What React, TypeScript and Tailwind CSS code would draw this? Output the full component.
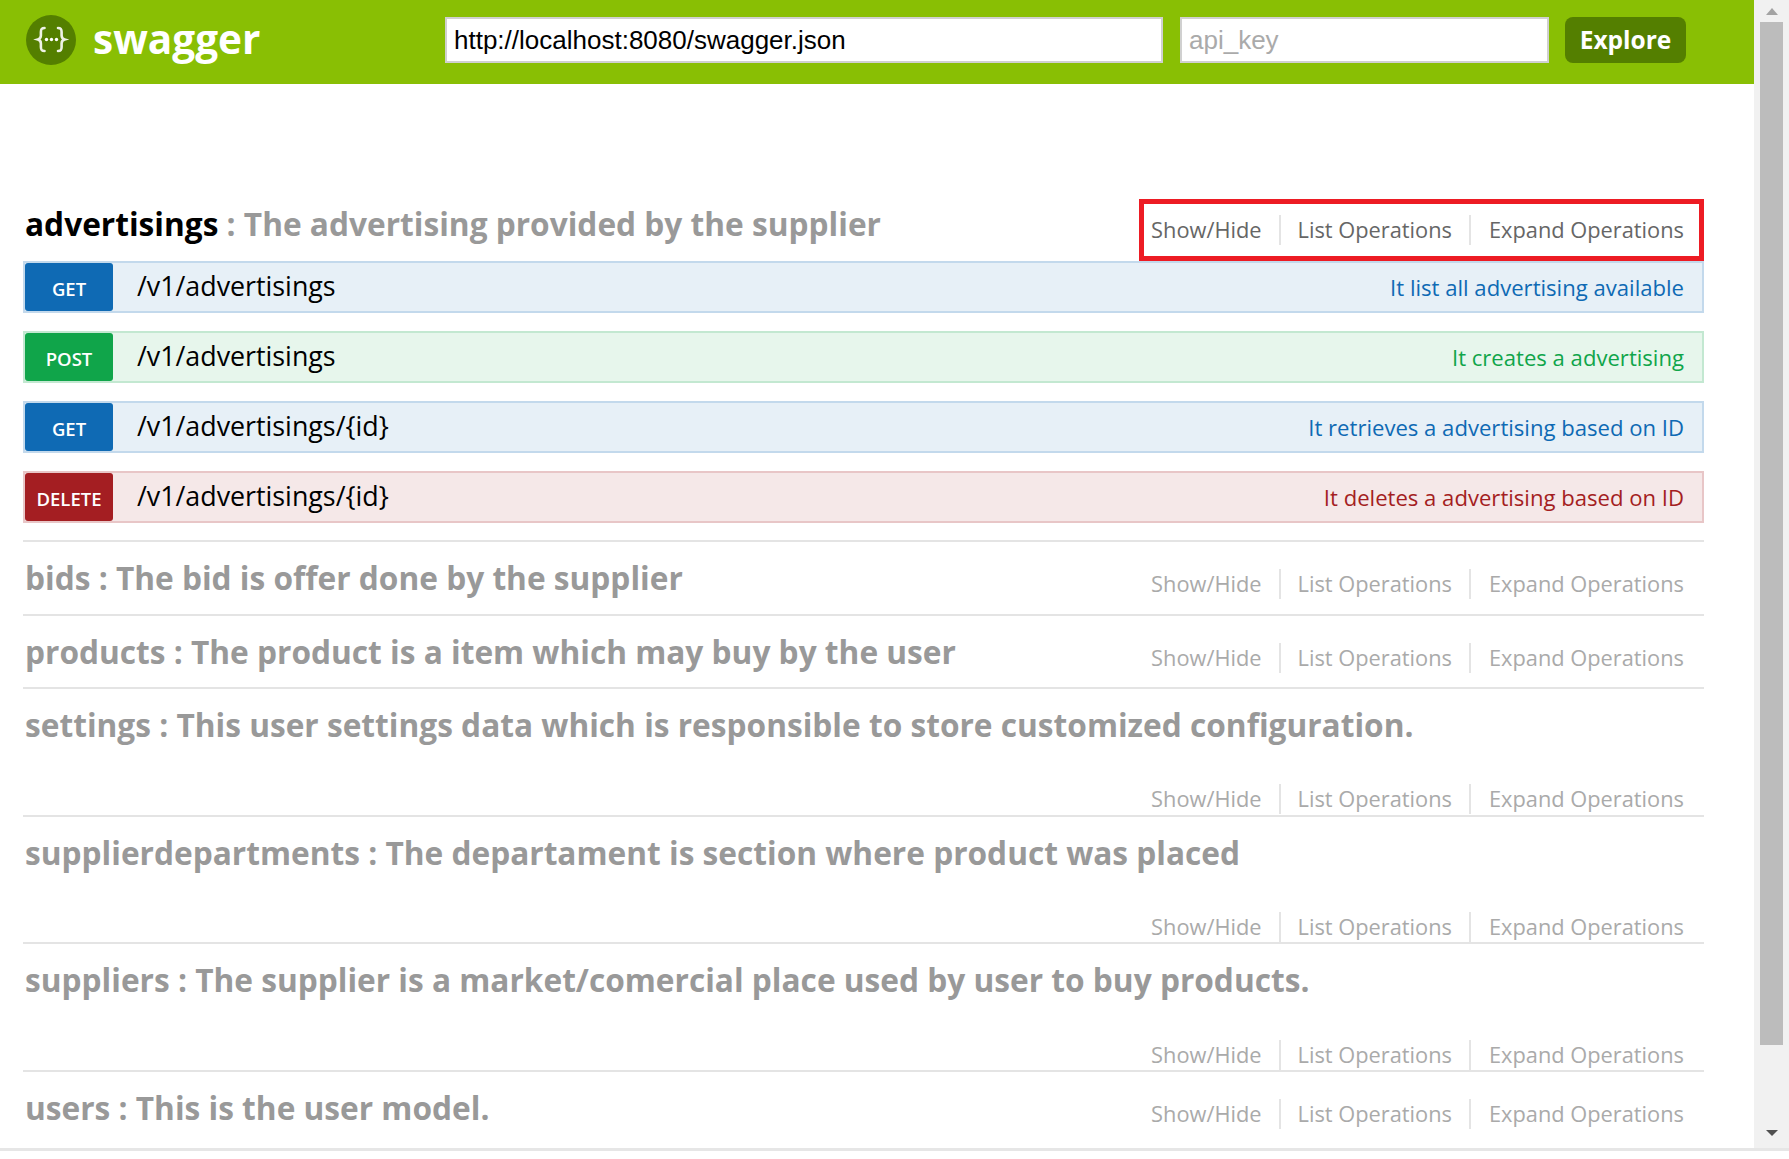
const LABEL_FONT = "font-['Open_Sans','Noto_Sans',sans-serif]";

type Operation = {
  method: string;
  path: string;
  summary: string;
  rowClass: string;
  badgeClass: string;
  textClass: string;
};

const METHOD_STYLES = {
  GET: {
    rowClass: "border-[#c3d9ec] bg-[#e7f0f7]",
    badgeClass: "bg-[#0f6ab4]",
    textClass: "text-[#0f6ab4]",
  },
  POST: {
    rowClass: "border-[#c3e8d1] bg-[#e7f6ec]",
    badgeClass: "bg-[#10a54a]",
    textClass: "text-[#10a54a]",
  },
  DELETE: {
    rowClass: "border-[#e8c6c7] bg-[#f5e8e8]",
    badgeClass: "bg-[#a41e22]",
    textClass: "text-[#a41e22]",
  },
};

const OPERATIONS: Operation[] = [
  { method: "GET", path: "/v1/advertisings", summary: "It list all advertising available", ...METHOD_STYLES.GET },
  { method: "POST", path: "/v1/advertisings", summary: "It creates a advertising", ...METHOD_STYLES.POST },
  { method: "GET", path: "/v1/advertisings/{id}", summary: "It retrieves a advertising based on ID", ...METHOD_STYLES.GET },
  { method: "DELETE", path: "/v1/advertisings/{id}", summary: "It deletes a advertising based on ID", ...METHOD_STYLES.DELETE },
];

const RESOURCES = [
  { name: "bids", text: "The bid is offer done by the supplier" },
  { name: "products", text: "The product is a item which may buy by the user" },
  { name: "settings", text: "This user settings data which is responsible to store customized configuration." },
  { name: "supplierdepartments", text: "The departament is section where product was placed" },
  { name: "suppliers", text: "The supplier is a market/comercial place used by user to buy products." },
  { name: "users", text: "This is the user model." },
];

function SwaggerLogo() {
  return (
    <svg viewBox="0 0 50 50" className="h-[50px] w-[50px] shrink-0">
      <circle cx="25" cy="25" r="25" fill="#547f00" />
      <g fill="none" stroke="#fff" strokeWidth="2.6" strokeLinecap="round" opacity="0.9">
        <path d="M18.5 13c-3 0-3.6 1.3-3.6 4v3.6c0 2-.9 3.3-3 3.9 2.1.6 3 1.9 3 3.9V32c0 2.7.6 4 3.6 4" />
        <path d="M32 13c3 0 3.6 1.3 3.6 4v3.6c0 2 .9 3.3 3 3.9-2.1.6-3 1.9-3 3.9V32c0 2.7-.6 4-3.6 4" />
      </g>
      <circle cx="20.5" cy="24.5" r="1.7" fill="#fff" />
      <circle cx="25.5" cy="24.5" r="1.7" fill="#fff" />
      <circle cx="30.5" cy="24.5" r="1.7" fill="#fff" />
    </svg>
  );
}

function Header() {
  return (
    <header className="flex h-[84px] items-center bg-[#89bf04] pb-[4px] pl-[26px]">
      <SwaggerLogo />
      <span className={`ml-[17px] w-[352px] pb-[2px] text-[40.5px] leading-none font-bold text-white ${LABEL_FONT}`}>swagger</span>
      <input
        readOnly
        value="http://localhost:8080/swagger.json"
        className="h-[46px] w-[718px] border-2 border-[#d0d0d0] bg-white px-[7px] font-['Liberation_Sans',sans-serif] text-[26px] text-black outline-none"
      />
      <input
        readOnly
        placeholder="api_key"
        className="ml-[17px] h-[46px] w-[369px] border-2 border-[#d0d0d0] bg-white px-[7px] font-['Liberation_Sans',sans-serif] text-[26px] outline-none placeholder:text-[#aaa]"
      />
      <button className={`ml-[16px] h-[46px] w-[121px] rounded-[8px] bg-[#547f00] text-[24.5px] font-bold text-white ${LABEL_FONT}`}>
        Explore
      </button>
    </header>
  );
}

function Links({ dim }: { dim: boolean }) {
  const color = dim ? "text-[#aaa]" : "text-[#666]";
  return (
    <ul className={`flex h-[30px] items-center text-[21.8px] leading-none ${color} ${LABEL_FONT}`}>
      <li className="border-r-2 border-[#e4e4e4] pr-[17px] leading-[30px]">Show/Hide</li>
      <li className="border-r-2 border-[#e4e4e4] px-[17px] leading-[30px]">List Operations</li>
      <li className="pl-[18px] leading-[30px]">Expand Operations</li>
    </ul>
  );
}

function OperationRow({ op }: { op: Operation }) {
  return (
    <div className={`flex h-[52px] items-center border-2 pr-[18px] ${op.rowClass}`}>
      <span className={`flex h-[48px] w-[88px] shrink-0 items-center justify-center rounded-[3px] pt-[3px] text-[18.5px] font-semibold text-white ${op.badgeClass}`}>
        {op.method}
      </span>
      <span className="ml-[24px] flex-1 pb-[1px] text-[26.8px] text-black">{op.path}</span>
      <span className={`pt-[2px] text-[22.1px] ${op.textClass}`}>{op.summary}</span>
    </div>
  );
}

function Scrollbar() {
  return (
    <aside className="flex w-[35px] shrink-0 flex-col items-center bg-[#f1f1f1]">
      <div className="flex h-[22px] items-center justify-center">
        <div className="h-0 w-0 border-x-[6px] border-b-[7px] border-x-transparent border-b-[#a3a3a3]" />
      </div>
      <div className="h-[1023px] w-[23px] bg-[#bcbcbc]" />
      <div className="flex flex-1 items-end justify-center pb-[12px]">
        <div className="h-0 w-0 border-x-[6px] border-t-[6px] border-x-transparent border-t-[#505050]" />
      </div>
    </aside>
  );
}

export default function App() {
  return (
    <div className={`h-[1159px] overflow-hidden bg-white ${LABEL_FONT}`}>
      <div className="flex h-[1151px] border-b-[3px] border-[#e6e6e6]">
        <main className="min-w-0 flex-1">
          <Header />
          <div className="pr-[50px] pl-[23px]">
            {/* open resource */}
            <section className="mt-[115px]">
              <div className="flex items-end justify-between">
                <h2 className="pb-[15px] pl-[2px] text-[31.65px] leading-[44px] font-bold text-[#999]">
                  <span className="text-black">advertisings</span> : The advertising provided by the supplier
                </h2>
                <div className="flex h-[62px] items-center border-[5px] border-[#ed1c24] pr-[15px] pl-[7px]">
                  <div className="-mt-[1px]">
                    <Links dim={false} />
                  </div>
                </div>
              </div>
              <div className="flex flex-col gap-[18px]">
                {OPERATIONS.map((op, i) => (
                  <OperationRow key={i} op={op} />
                ))}
              </div>
            </section>
            <div className="mt-[17px] border-t-2 border-[#e4e4e4]">
              {RESOURCES.map((r, i) => (
                <section
                  key={r.name}
                  className={`flex flex-wrap justify-between gap-y-[9.6px] pt-[13px] ${i < RESOURCES.length - 1 ? "border-b-2 border-[#e4e4e4]" : ""}`}
                >
                  <h2 className="h-[58.6px] pl-[2px] text-[31.65px] leading-[46px] font-bold text-[#999]">
                    {r.name} : {r.text}
                  </h2>
                  <div className="mt-[14px] mb-[0.4px] ml-auto pr-[20px]">
                    <Links dim />
                  </div>
                </section>
              ))}
            </div>
          </div>
        </main>
        <Scrollbar />
      </div>
    </div>
  );
}
